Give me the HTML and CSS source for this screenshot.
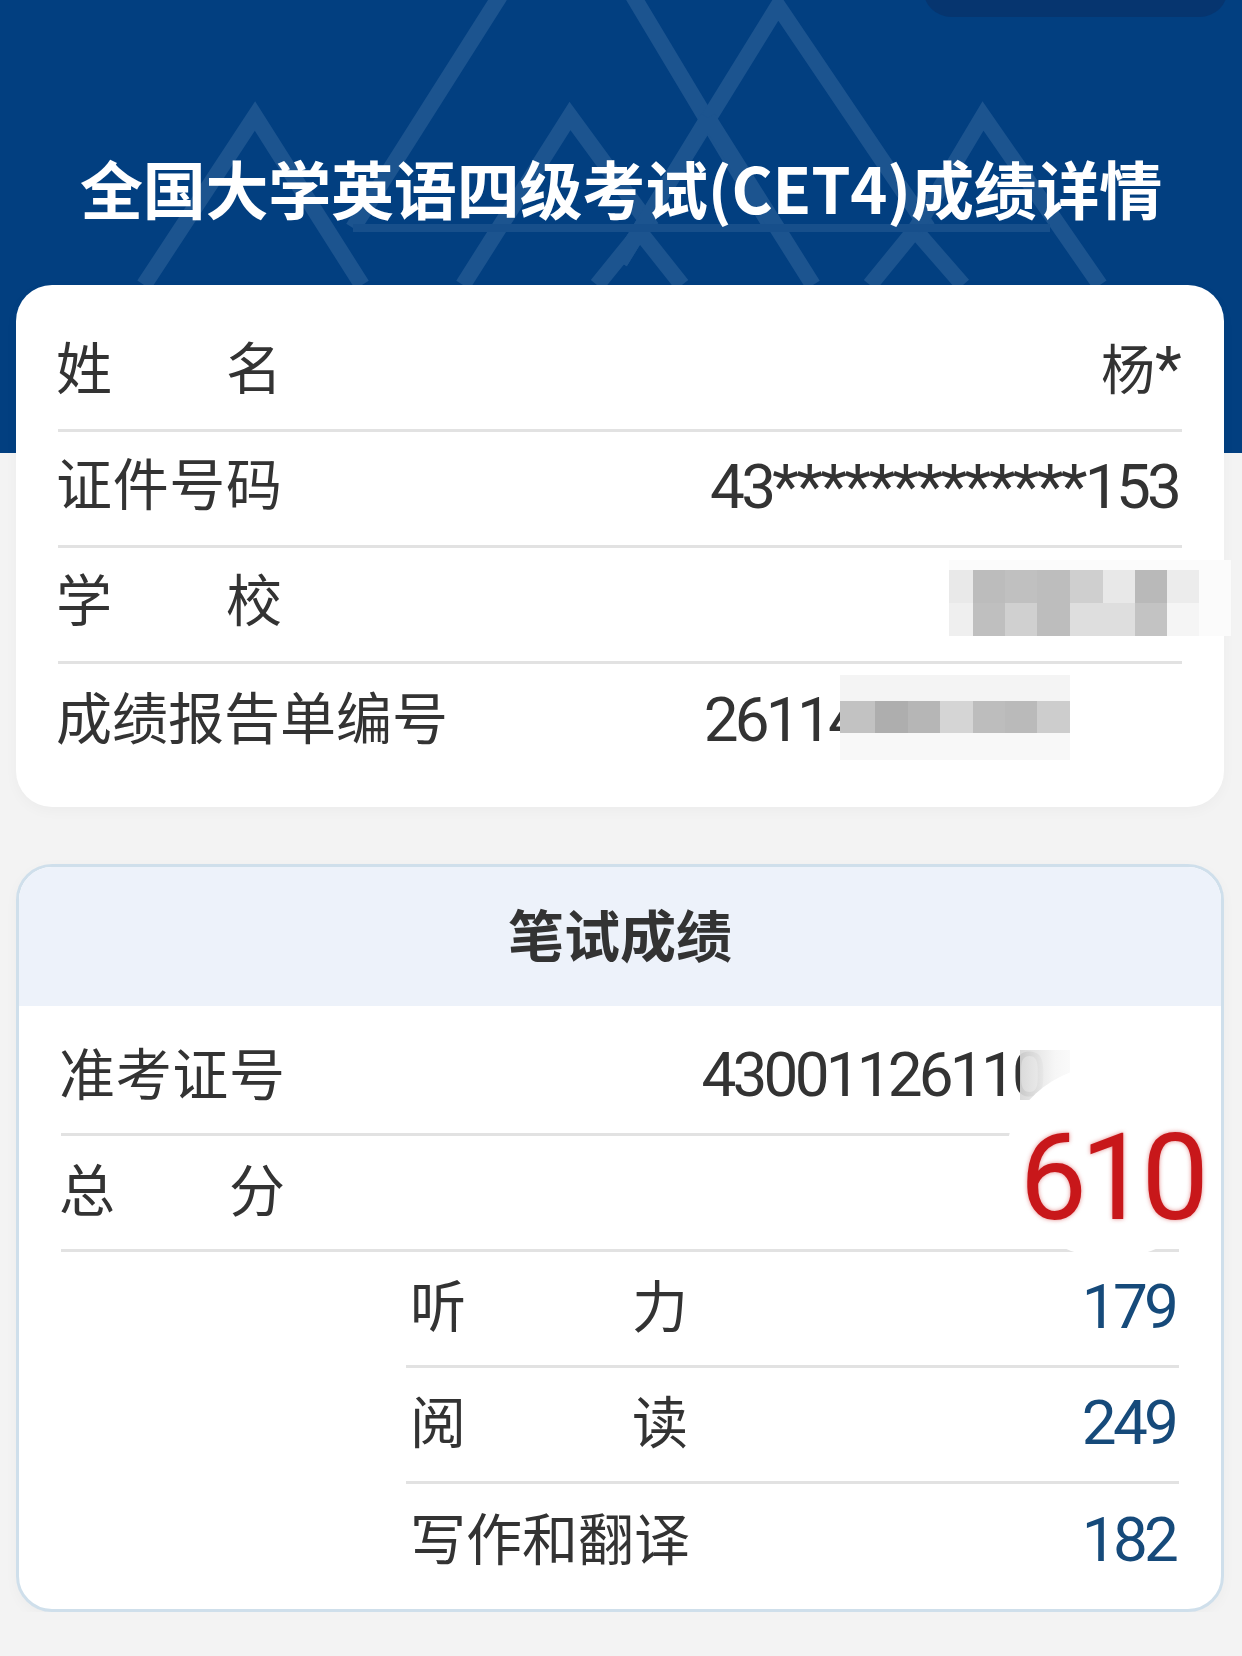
FILE: index.html
```html
<!DOCTYPE html>
<html lang="zh-CN">
<head>
    <meta charset="UTF-8">
    <meta name="viewport" content="width=device-width, initial-scale=1.0">
    <title>成绩详情</title>
    <link rel="stylesheet" href="styles.css">
</head>
<body>

    <header class="banner">
        <svg class="banner-pattern" width="1242" height="290" viewBox="0 0 1242 290">
            <g fill="none" stroke="#1c548f" stroke-width="16">
                <path d="M353 228 L500 -4 M633 -4 L772 228"/>
                <path d="M620 262 L778 6 L928 228"/>
                <path d="M144 285 L255 116 L362 285"/>
                <path d="M463 285 L570 116 L652 228"/>
                <path d="M708 118 L620 262 M708 118 L813 285"/>
                <path d="M597 285 L640 232 L682 285"/>
                <path d="M870 285 L915 230 L963 285"/>
                <path d="M915 230 L983 116 L1100 285"/>
                <path d="M353 228 H1050" stroke="#174f8b" stroke-width="8"/>
            </g>
        </svg>
        <div class="banner-pill"></div>
        <h1 class="banner-title">全国大学英语四级考试(CET4)成绩详情</h1>
    </header>

    <main class="content">
        <section class="card card-info">
            <div class="row">
                <span class="label label-4">姓名</span>
                <span class="value value-name"><span class="value-cjk">杨</span>*</span>
            </div>
            <div class="row">
                <span class="label label-4">证件号码</span>
                <span class="value">43<span class="stars">*************</span>153</span>
            </div>
            <div class="row">
                <span class="label label-4">学校</span>
            </div>
            <div class="row row-last">
                <span class="label">成绩报告单编号</span>
                <span class="value value-report">26114</span>
            </div>
            <svg class="mosaic mosaic-school" width="282" height="76" viewBox="0 0 282 76">
                <rect x="0" y="0" width="282" height="76" fill="#fbfbfb"/>
                <rect x="0" y="10" width="24" height="33" fill="#e9e9e9"/>
                <rect x="24" y="10" width="32" height="33" fill="#bcbcbc"/>
                <rect x="56" y="10" width="32" height="33" fill="#c0c0c0"/>
                <rect x="88" y="10" width="33" height="33" fill="#bdbdbd"/>
                <rect x="121" y="10" width="33" height="33" fill="#cfcfcf"/>
                <rect x="154" y="10" width="32" height="33" fill="#e8e8e8"/>
                <rect x="186" y="10" width="32" height="33" fill="#b9b9b9"/>
                <rect x="218" y="10" width="32" height="33" fill="#ececec"/>
                <rect x="0" y="43" width="24" height="33" fill="#efefef"/>
                <rect x="24" y="43" width="32" height="33" fill="#bfbfbf"/>
                <rect x="56" y="43" width="32" height="33" fill="#d0d0d0"/>
                <rect x="88" y="43" width="33" height="33" fill="#bdbdbd"/>
                <rect x="121" y="43" width="65" height="33" fill="#dedede"/>
                <rect x="186" y="43" width="32" height="33" fill="#c3c3c3"/>
                <rect x="218" y="43" width="32" height="33" fill="#f5f5f5"/>
            </svg>
            <svg class="mosaic mosaic-report" width="230" height="85" viewBox="0 0 230 85">
                <rect x="0" y="0" width="230" height="26" fill="#f4f4f4"/>
                <rect x="0" y="26" width="35" height="32" fill="#c2c2c2"/>
                <rect x="35" y="26" width="33" height="32" fill="#aeaeae"/>
                <rect x="68" y="26" width="32" height="32" fill="#b6b6b6"/>
                <rect x="100" y="26" width="33" height="32" fill="#d5d5d5"/>
                <rect x="133" y="26" width="32" height="32" fill="#bdbdbd"/>
                <rect x="165" y="26" width="32" height="32" fill="#bababa"/>
                <rect x="197" y="26" width="33" height="32" fill="#cdcdcd"/>
                <rect x="0" y="58" width="230" height="27" fill="#f8f8f8"/>
            </svg>
        </section>

        <section class="card card-score">
            <h2 class="card-title">笔试成绩</h2>
            <div class="score-body">
                <div class="row">
                    <span class="label label-4">准考证号</span>
                    <span class="value value-ticket">43001126110</span>
                </div>
                <div class="row">
                    <span class="label label-4">总分</span>
                </div>
                <div class="sub-rows">
                    <div class="row">
                        <span class="label label-5">听力</span>
                        <span class="value value-blue">179</span>
                    </div>
                    <div class="row">
                        <span class="label label-5">阅读</span>
                        <span class="value value-blue">249</span>
                    </div>
                    <div class="row row-last">
                        <span class="label label-5">写作和翻译</span>
                        <span class="value value-blue">182</span>
                    </div>
                </div>
            </div>
            <div class="ticket-blur"></div>
            <div class="total-patch"><span class="total">610</span></div>
        </section>
    </main>

</body>
</html>
```

FILE: styles.css
```css
* {
    box-sizing: border-box;
}

body {
    margin: 0;
    background-color: #f3f3f3;
    color: #333;
    font-family: Roboto, "Noto Sans CJK SC", sans-serif;
}

.banner {
    position: relative;
    height: 453px;
    padding-top: 145px;
    background-color: #023f80;
    overflow: hidden;
}

.banner-pattern {
    position: absolute;
    top: 0;
    left: 0;
}

.banner-pill {
    position: absolute;
    top: -40px;
    left: 923px;
    width: 305px;
    height: 57px;
    border-radius: 30px;
    background-color: #06356f;
}

.banner-title {
    position: relative;
    margin: 0;
    color: #fff;
    font-size: 63px;
    line-height: 84px;
    font-weight: 700;
    letter-spacing: -0.2px;
    text-align: center;
    font-family: "Noto Sans CJK SC", sans-serif;
    white-space: nowrap;
}

.content {
    display: flex;
    flex-direction: column;
    gap: 57px;
    margin-top: -168px;
    padding: 0 18px 0 16px;
}

.card {
    position: relative;
    background-color: #fff;
    border-radius: 36px;
    box-shadow: 0 4px 14px rgba(0, 0, 0, 0.03);
}

.card-info {
    height: 522px;
    padding: 31px 42px 0;
}

.card-score {
    height: 748px;
    border: 3px solid #cfdfeb;
    overflow: hidden;
}

.card-title {
    margin: 0;
    height: 139px;
    background-color: #edf2fa;
    font-size: 56px;
    line-height: 131px;
    font-weight: 700;
    text-align: center;
    font-family: "Noto Sans CJK SC", sans-serif;
}

.score-body {
    padding: 14px 42px 0;
}

.row {
    display: flex;
    justify-content: space-between;
    align-items: center;
    height: 116px;
    border-bottom: 3px solid #e2e2e2;
}

.row-last {
    border-bottom: 0;
}

.label {
    margin-left: -2px;
    padding-bottom: 13px;
    font-family: "Noto Sans CJK SC", sans-serif;
    font-size: 56px;
    white-space: nowrap;
}

.card-info .label {
    padding-bottom: 16px;
}

.label-4 {
    width: 226px;
    text-align-last: justify;
}

.label-5 {
    width: 278px;
    margin-left: 4px;
    text-align-last: justify;
}

.value {
    margin-right: 4px;
    padding-bottom: 5px;
    font-size: 62px;
    letter-spacing: -3.8px;
    white-space: nowrap;
}

.value-name {
    padding-bottom: 12px;
}

.value-cjk {
    font-size: 54px;
    letter-spacing: 0;
}

.stars {
    letter-spacing: -2.65px;
}

.value-report {
    padding-right: 319px;
}

.value-ticket {
    padding-right: 132px;
}

.value-blue {
    color: #164a7a;
}

.sub-rows {
    margin-left: 345px;
}

.mosaic {
    position: absolute;
}

.mosaic-school {
    top: 275px;
    left: 933px;
}

.mosaic-report {
    top: 390px;
    left: 824px;
}

.ticket-blur {
    position: absolute;
    top: 183px;
    left: 1001px;
    width: 50px;
    height: 50px;
    background: linear-gradient(to right, rgba(215, 215, 215, 0.92), #f6f6f6 70%, #fafafa);
}

.total-patch {
    position: absolute;
    top: 198px;
    left: 986px;
    display: flex;
    justify-content: center;
    align-items: center;
    width: 212px;
    height: 193px;
    padding-top: 32px;
    border-radius: 50%;
    background-color: #fff;
}

.total {
    color: #c8171a;
    font-size: 120px;
    letter-spacing: -6.5px;
    text-shadow: 0 0 4px rgba(200, 23, 26, 0.5);
}
```
